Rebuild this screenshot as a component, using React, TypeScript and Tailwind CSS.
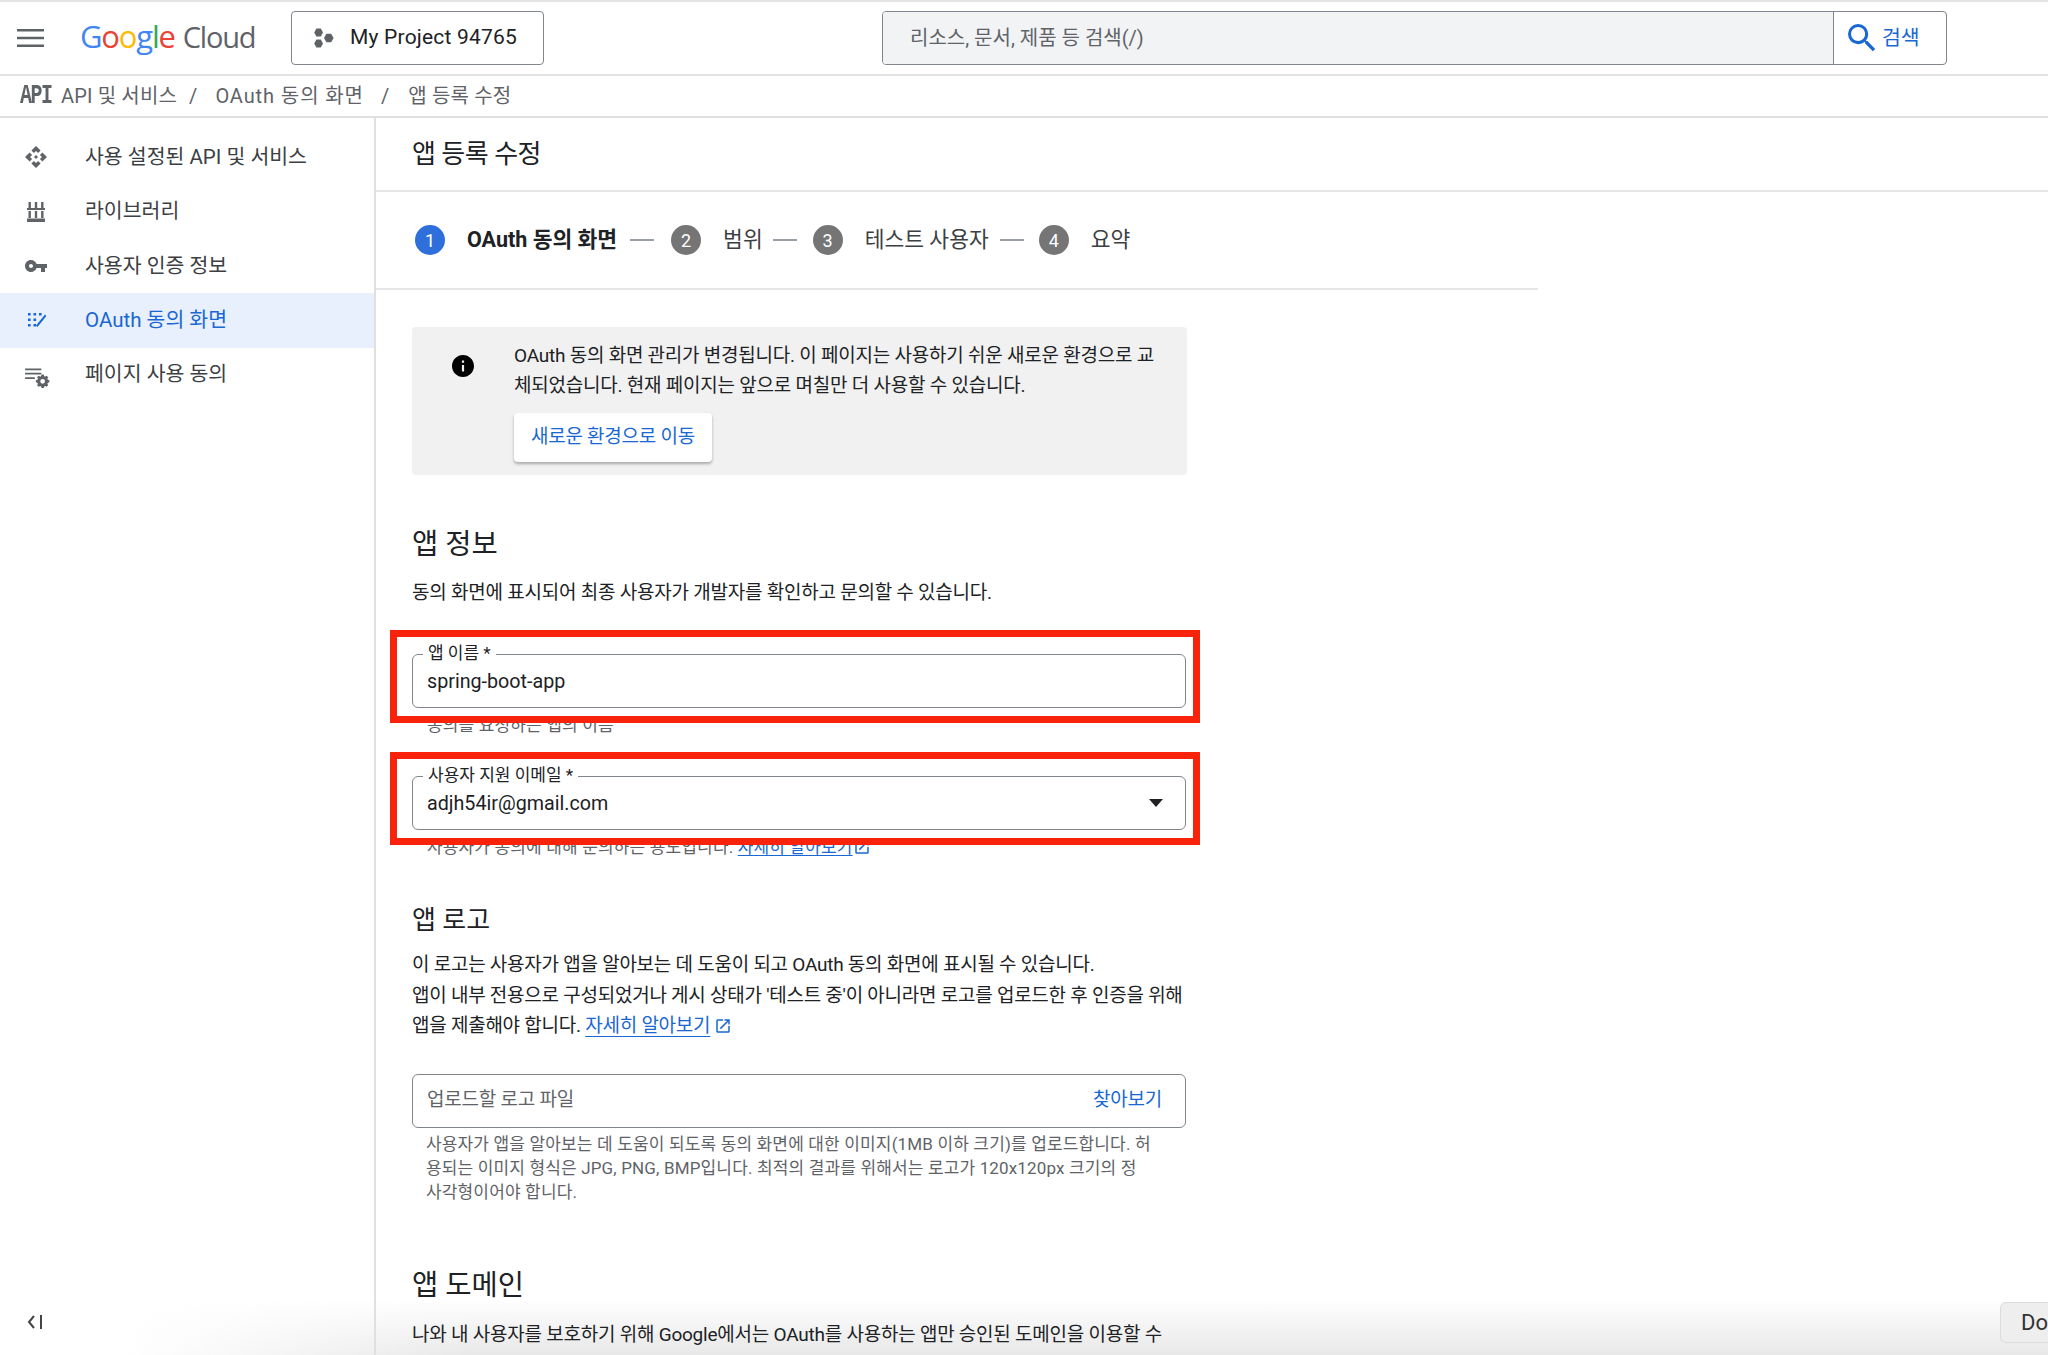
import * as React from "react";

const apiPath = "M14 12l-2 2-2-2 2-2 2 2zm-2-6l2.12 2.12 2.5-2.5L12 1 7.38 5.62l2.5 2.5L12 6zm-6 6l2.12-2.12-2.5-2.5L1 12l4.62 4.62 2.5-2.5L6 12zm12 0l-2.12 2.12 2.5 2.5L23 12l-4.62-4.62-2.5 2.5L18 12zm-6 6l-2.12-2.12-2.5 2.5L12 23l4.62-4.62-2.5-2.5L12 18z";
const keyPath = "M12.65 10C11.83 7.67 9.61 6 7 6c-3.31 0-6 2.69-6 6s2.69 6 6 6c2.61 0 4.83-1.67 5.65-4H17v4h4v-4h2v-4H12.65zM7 14c-1.1 0-2-.9-2-2s.9-2 2-2 2 .9 2 2-.9 2-2 2z";

function ApiIcon() {
    return (
        <svg viewBox="0 0 24 24" className="w-6 h-6 fill-[#5f6368]">
            <path d={apiPath} />
        </svg>
    );
}

function LibraryIcon() {
    return (
        <svg viewBox="0 0 24 24" className="w-6 h-6 fill-[#5f6368]">
            <path d="M4.5 2h2.4v6H4.5zM10.8 2h2.4v6h-2.4zM17.1 2h2.4v6h-2.4zM3 8h18v2H3zM4.5 11h2.4v7H4.5zM10.8 11h2.4v7h-2.4zM17.1 11h2.4v7h-2.4zM3 18.5h18V22H3z" />
        </svg>
    );
}

function KeyIcon() {
    return (
        <svg viewBox="0 0 24 24" className="w-6 h-6 fill-[#5f6368]">
            <path d={keyPath} />
        </svg>
    );
}

function ConsentIcon() {
    return (
        <svg viewBox="0 0 24 24" className="w-6 h-6 fill-[#1967d2]">
            <path d="M4 5h2.6v2.6H4zM9.5 5h2.6v2.6H9.5zM15 5h2.6v2.6H15zM4 10.5h2.6v2.6H4zM9.5 10.5h2.6v2.6H9.5zM4 16h2.6v2.6H4zM9.5 16h2.6v2.6H9.5zM21 6.5l1.4 1.4L13.5 19l-1.4-1.4z" />
        </svg>
    );
}

function PageUsageIcon() {
    return (
        <svg viewBox="0 0 24 24" className="w-[26px] h-[26px] fill-[#5f6368]">
            <path d="M1 6h15v1.6H1zM1 10h15v1.6H1zM1 14h9v1.6H1z" />
            <path d="M23.4 16.8l-1.5-.5a4.5 4.5 0 0 0-.3-.8l.7-1.4-1.4-1.4-1.4.7a4.5 4.5 0 0 0-.8-.3l-.5-1.5h-2l-.5 1.5a4.5 4.5 0 0 0-.8.3l-1.4-.7-1.4 1.4.7 1.4a4.5 4.5 0 0 0-.3.8l-1.5.5v2l1.5.5c.1.3.2.5.3.8l-.7 1.4 1.4 1.4 1.4-.7c.3.1.5.2.8.3l.5 1.5h2l.5-1.5c.3-.1.5-.2.8-.3l1.4.7 1.4-1.4-.7-1.4c.1-.3.2-.5.3-.8l1.5-.5zM17.2 20a2.2 2.2 0 1 1 0-4.4 2.2 2.2 0 0 1 0 4.4z" />
        </svg>
    );
}

function ExternalIcon() {
    return (
        <svg viewBox="0 0 24 24" className="w-[18px] h-[18px] fill-[#1967d2] shrink-0">
            <path d="M19 19H5V5h7V3H5a2 2 0 0 0-2 2v14a2 2 0 0 0 2 2h14c1.1 0 2-.9 2-2v-7h-2v7zM14 3v2h3.59l-9.83 9.83 1.41 1.41L19 6.41V10h2V3h-7z" />
        </svg>
    );
}

const navItems = [
    { label: "사용 설정된 API 및 서비스", icon: <ApiIcon /> },
    { label: "라이브러리", icon: <LibraryIcon /> },
    { label: "사용자 인증 정보", icon: <KeyIcon /> },
    { label: "OAuth 동의 화면", icon: <ConsentIcon />, active: true },
    { label: "페이지 사용 동의", icon: <PageUsageIcon /> },
];

const steps = [
    { n: 1, label: "OAuth 동의 화면", active: true, dash: "ml-[13px] mr-[17px]" },
    { n: 2, label: "범위", dash: "ml-[10px] mr-[16px]" },
    { n: 3, label: "테스트 사용자", dash: "ml-[11px] mr-[15px]" },
    { n: 4, label: "요약" },
];

function Header() {
    return (
        <div className="flex items-center h-[76px] shrink-0 border-t-2 border-b-2 border-[#e2e3e3] bg-white">
            <svg viewBox="0 0 27 18" className="ml-[17px] w-[27px] h-[18px] fill-[#5f6368]">
                <path d="M0 0h27v2.6H0zM0 7.7h27v2.6H0zM0 15.4h27V18H0z" />
            </svg>
            <div className="ml-[36px] w-[211px] flex items-baseline text-[31px] tracking-[-1.2px] leading-none pb-[3px] font-['Open_Sans',sans-serif]">
                <span className="text-[#4285f4]">G</span>
                <span className="text-[#ea4335]">o</span>
                <span className="text-[#fbbc05]">o</span>
                <span className="text-[#4285f4]">g</span>
                <span className="text-[#34a853]">l</span>
                <span className="text-[#ea4335]">e</span>
                <span className="ml-[8px] text-[#5f6368] text-[29px]">Cloud</span>
            </div>
            <div className="flex items-center h-[54px] w-[253px] border border-[#80868b] rounded-[4px] pl-[22px]">
                <svg viewBox="0 0 20 20" className="w-5 h-5 fill-[#5f6368]">
                    <path d="M2.4 .4h4.4l2.2 4-2.2 4H2.4L.2 4.4zM2.4 11.4h4.4l2.2 4-2.2 4H2.4L.2 15.4zM12.4 5.8h4.8l2.4 4.2-2.4 4.2h-4.8L10 10z" />
                </svg>
                <span className="ml-4 text-[21px] text-[#202124] tracking-[0.2px]">My Project 94765</span>
            </div>
            <div className="flex h-[54px] ml-[338px] w-[1065px] border border-[#80868b] rounded-[4px] overflow-hidden">
                <div className="flex-1 bg-[#f1f3f4] flex items-center pl-[27px] text-[20px] text-[#5f6368]">
                    리소스, 문서, 제품 등 검색(/)
                </div>
                <div className="w-[113px] border-l border-[#80868b] flex items-center pl-[14px] gap-[6px] text-[20.5px] text-[#1967d2]">
                    <svg viewBox="3 3 18 18" className="w-[28px] h-[28px] fill-[#1967d2]">
                        <path d="M15.5 14h-.79l-.28-.27A6.47 6.47 0 0 0 16 9.5 6.5 6.5 0 1 0 9.5 16c1.61 0 3.09-.59 4.23-1.57l.27.28v.79l5 4.99L20.49 19l-4.99-5zm-6 0C7.01 14 5 11.99 5 9.5S7.01 5 9.5 5 14 7.01 14 9.5 11.99 14 9.5 14z" />
                    </svg>
                    검색
                </div>
            </div>
        </div>
    );
}

function Breadcrumb() {
    return (
        <div className="flex items-center h-[42px] shrink-0 border-b-2 border-[#dfe0e0] text-[20px] text-[#5f6368] tracking-[0.15px]">
            <span className="ml-[20px] w-[41px] inline-block scale-y-[1.35] text-[20px] font-bold font-['Liberation_Mono',monospace] tracking-[-1.5px]">API</span>
            <span>API 및 서비스</span>
            <span className="ml-[12px]">/</span>
            <span className="ml-[18px] tracking-[0.9px]">OAuth 동의 화면</span>
            <span className="ml-[17px]">/</span>
            <span className="ml-[19px]">앱 등록 수정</span>
        </div>
    );
}

function Sidebar() {
    return (
        <aside className="relative z-10 w-[376px] shrink-0 border-r-2 border-[#dfe0e0] flex flex-col pt-[12px] pb-[26px]">
            {navItems.map((item) => (
                <div
                    key={item.label}
                    className={`flex items-center h-[54.4px] pl-[24px] text-[20.5px] ${item.active ? "bg-[#e8f0fe] text-[#1967d2]" : "text-[#3c4043]"}`}
                >
                    <span className="w-[61px] flex">{item.icon}</span>
                    {item.label}
                </div>
            ))}
            <svg viewBox="0 0 16 14" className="mt-auto ml-[27px] w-4 h-[14px]">
                <path d="M7 1L2 7l5 6" fill="none" stroke="#444" strokeWidth="2" />
                <path d="M13 0h2v14h-2z" fill="#444" />
            </svg>
        </aside>
    );
}

function Stepper() {
    return (
        <div className="flex items-center h-[98px] w-[1162px] border-b-2 border-[#e4e5e5] pl-[39px] text-[21.5px] text-[#3c4043]">
            {steps.map((step) => (
                <React.Fragment key={step.n}>
                    <span className={`flex items-center justify-center w-[30px] h-[30px] rounded-full text-white text-[18px] ${step.active ? "bg-[#2f6fdb]" : "bg-[#757575]"}`}>
                        {step.n}
                    </span>
                    <span className={`ml-[22px] ${step.active ? "font-bold text-[#202124]" : ""}`}>{step.label}</span>
                    {step.dash && <span className={`w-[24px] h-[2px] bg-[#9aa0a6] ${step.dash}`} />}
                </React.Fragment>
            ))}
        </div>
    );
}

function Notice() {
    return (
        <div className="flex mt-[37px] w-[775px] h-[148px] rounded-[4px] bg-[#f1f1f1] pl-[40px] pt-[14px]">
            <svg viewBox="2 2 20 20" className="w-[22px] h-[22px] mt-[14px] fill-black">
                <path d="M12 2C6.48 2 2 6.48 2 12s4.48 10 10 10 10-4.48 10-10S17.52 2 12 2zm1 15h-2v-6h2v6zm0-8h-2V7h2v2z" />
            </svg>
            <div className="ml-[40px]">
                <p className="text-[19px] leading-[30px] text-[#202124] whitespace-nowrap tracking-[-0.23px]">
                    OAuth 동의 화면 관리가 변경됩니다. 이 페이지는 사용하기 쉬운 새로운 환경으로 교<br />
                    체되었습니다. 현재 페이지는 앞으로 며칠만 더 사용할 수 있습니다.
                </p>
                <button className="mt-[12px] w-[198px] h-[49px] bg-white rounded-[4px] text-[19px] text-[#1967d2] tracking-[-0.23px] shadow-[0_2px_3px_rgba(60,64,67,0.4)]">
                    새로운 환경으로 이동
                </button>
            </div>
        </div>
    );
}

function OutlinedField(props: { label: string; value: string; dropdown?: boolean }) {
    return (
        <div className="relative w-[774px] h-[54px] border border-[#80868b] rounded-[6px] flex items-center justify-between pl-[14px] pr-[22px]">
            <span className="absolute left-[10px] top-[-12px] bg-white px-[5px] text-[17px] leading-[20px] text-[#202124]">{props.label}</span>
            <span className="text-[19.7px] text-[#202124] pt-[2px]">{props.value}</span>
            {props.dropdown && (
                <svg viewBox="0 0 14 8" className="w-[14px] h-2 fill-[#202124]">
                    <path d="M0 0h14L7 8z" />
                </svg>
            )}
            {/* 빨간 강조 박스 */}
            <div className="absolute left-[-23px] right-[-15px] top-[-25px] bottom-[-16px] border-[7px] border-[#f8230a] z-10" />
        </div>
    );
}

function Form() {
    return (
        <div className="w-[775px]">
            <h2 className="mt-[53px] text-[28.5px] leading-[34px] text-[#202124]">앱 정보</h2>
            <p className="mt-[16px] text-[19px] leading-[30px] text-[#202124] tracking-[-0.23px] whitespace-nowrap">
                동의 화면에 표시되어 최종 사용자가 개발자를 확인하고 문의할 수 있습니다.
            </p>
            <div className="mt-[46px]">
                <OutlinedField label="앱 이름 *" value="spring-boot-app" />
            </div>
            <p className="ml-[15px] mt-[6px] text-[17px] leading-[22px] text-[#5f6368] tracking-[0.15px]">동의를 요청하는 앱의 이름</p>
            <div className="mt-[40px]">
                <OutlinedField label="사용자 지원 이메일 *" value="adjh54ir@gmail.com" dropdown />
            </div>
            <p className="ml-[15px] mt-[6px] flex items-center text-[17px] leading-[22px] text-[#5f6368] tracking-[0.15px]">
                사용자가 동의에 대해 문의하는 용도입니다.&nbsp;
                <span className="text-[#1967d2] underline underline-offset-2">자세히 알아보기</span>
                <ExternalIcon />
            </p>
            <h2 className="mt-[46px] text-[26px] leading-[32px] text-[#202124]">앱 로고</h2>
            <p className="mt-[14px] text-[19px] leading-[30.5px] text-[#202124] tracking-[-0.25px] whitespace-nowrap">
                이 로고는 사용자가 앱을 알아보는 데 도움이 되고 OAuth 동의 화면에 표시될 수 있습니다.<br />
                앱이 내부 전용으로 구성되었거나 게시 상태가 '테스트 중'이 아니라면 로고를 업로드한 후 인증을 위해<br />
                앱을 제출해야 합니다.&nbsp;
                <span className="text-[#1967d2] underline underline-offset-4">자세히 알아보기</span>
                <span className="inline-block align-[-3px] ml-[4px]"><ExternalIcon /></span>
            </p>
            <div className="mt-[32px] w-[774px] h-[54px] border border-[#80868b] rounded-[6px] flex items-center justify-between pl-[14px] pr-[23px] text-[19px] tracking-[-0.23px]">
                <span className="text-[#5f6368]">업로드할 로고 파일</span>
                <span className="text-[#1967d2]">찾아보기</span>
            </div>
            <p className="ml-[14px] mt-[4px] text-[17px] leading-[24px] text-[#5f6368] tracking-[0.15px] whitespace-nowrap">
                사용자가 앱을 알아보는 데 도움이 되도록 동의 화면에 대한 이미지(1MB 이하 크기)를 업로드합니다. 허<br />
                용되는 이미지 형식은 JPG, PNG, BMP입니다. 최적의 결과를 위해서는 로고가 120x120px 크기의 정<br />
                사각형이어야 합니다.
            </p>
            <h2 className="mt-[65px] text-[28.5px] leading-[34px] text-[#202124]">앱 도메인</h2>
            <p className="mt-[17px] text-[19px] leading-[30px] text-[#202124] tracking-[-0.23px] whitespace-nowrap">
                나와 내 사용자를 보호하기 위해 Google에서는 OAuth를 사용하는 앱만 승인된 도메인을 이용할 수
            </p>
        </div>
    );
}

export default function App() {
    return (
        <div className="relative flex flex-col h-[1355px] w-full overflow-hidden bg-white font-['Roboto','Noto_Sans_CJK_KR',sans-serif]">
            {/* 하단 그림자 */}
            <div className="pointer-events-none absolute inset-x-0 bottom-0 h-[56px] bg-gradient-to-t from-[#e8e8e8] to-transparent [mask-image:linear-gradient(to_right,transparent_120px,black_480px)]" />
            <Header />
            <Breadcrumb />
            <div className="flex flex-1 min-h-0">
                <Sidebar />
                <main className="relative z-10 flex-1 min-w-0 overflow-hidden">
                    <div className="h-[74px] border-b-2 border-[#e4e5e5] pl-[36px] flex items-center text-[26px] text-[#202124] tracking-[-0.5px]">
                        앱 등록 수정
                    </div>
                    <Stepper />
                    <div className="pl-[36px]">
                        <Notice />
                        <Form />
                    </div>
                </main>
            </div>
            <div className="absolute z-20 right-[-20px] top-[1302px] w-[68px] h-[41px] rounded-[6px] border border-[#dcdcdc] bg-[#eeeeee] pl-[20px] flex items-center text-[22px] text-[#333333]">
                Do
            </div>
        </div>
    );
}
